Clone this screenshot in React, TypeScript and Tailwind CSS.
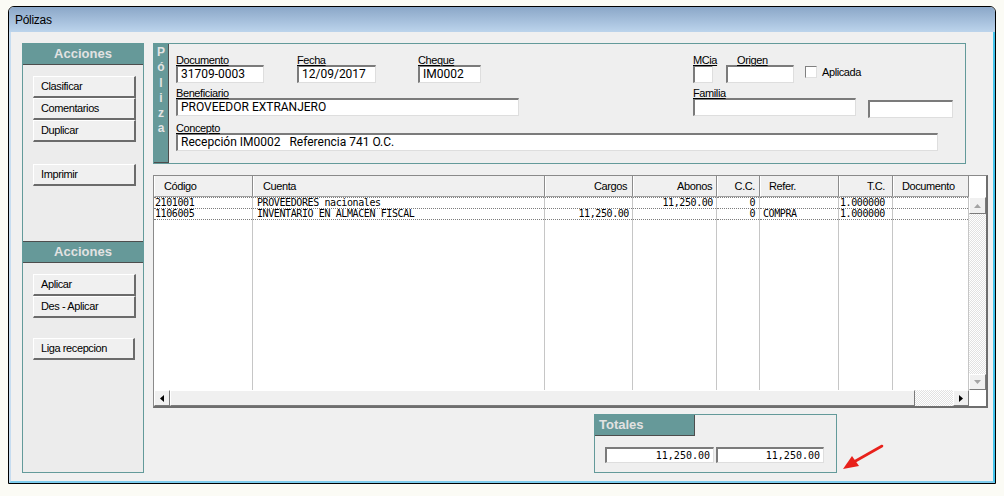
import React from "react";

const sans = "font-['Liberation_Sans',Arial,sans-serif] text-[11px] tracking-[-0.4px]";
const mono = "font-['DejaVu_Sans_Mono',monospace] text-[10px]";
const dither =
  "bg-[image:repeating-conic-gradient(#ffffff_0%_25%,#e2e2e2_0%_50%)] bg-[length:2px_2px]";

function Lbl({ children, className = "" }: { children?: React.ReactNode; className?: string }) {
  return (
    <div className={`h-[12px] leading-[14px] whitespace-nowrap underline decoration-1 underline-offset-[1px] ${className}`}>
      {children}
    </div>
  );
}

function Field({ children, className = "" }: { children?: React.ReactNode; className?: string }) {
  return (
    <div
      className={`h-[18px] bg-white border-t-2 border-l-2 border-t-[#7b7b7b] border-l-[#7b7b7b] border-r border-b border-r-[#dedede] border-b-[#dedede] pl-[3px] font-['Roboto',sans-serif] text-[12px] tracking-normal leading-[12px] pt-[1px] whitespace-pre overflow-hidden ${className}`}
    >
      {children}
    </div>
  );
}

function Btn({ label, w = "w-[103px]" }: { label: string; w?: string }) {
  return (
    <div
      className={`${w} h-[22px] bg-[#f0f0f0] border-t border-l border-t-white border-l-white border-r-2 border-b-2 border-r-[#6b6b6b] border-b-[#6b6b6b] pl-[7px] flex items-center`}
    >
      {label}
    </div>
  );
}

function Raised({ children, className = "" }: { children?: React.ReactNode; className?: string }) {
  return (
    <div
      className={`bg-[#f0f0f0] border-t border-l border-t-white border-l-white border-r border-b border-r-[#7a7a7a] border-b-[#7a7a7a] flex items-center justify-center ${className}`}
    >
      {children}
    </div>
  );
}

type Col = {
  w: string;
  h: string;
  ha: string;
  da: string;
  r: [string, string];
};

const cols: Col[] = [
  { w: "w-[99px]", h: "Código", ha: "pl-[9px] text-left", da: "pl-[1px] text-left", r: ["2101001", "1106005"] },
  { w: "w-[292px]", h: "Cuenta", ha: "pl-[9px] text-left", da: "pl-[4px] text-left", r: ["PROVEEDORES nacionales", "INVENTARIO EN ALMACEN FISCAL"] },
  { w: "w-[88px]", h: "Cargos", ha: "pr-[5px] text-right", da: "pr-[3px] text-right", r: ["", "11,250.00"] },
  { w: "w-[84px]", h: "Abonos", ha: "pr-[4px] text-right", da: "pr-[3px] text-right", r: ["11,250.00", ""] },
  { w: "w-[43px]", h: "C.C.", ha: "pr-[4px] text-right", da: "pr-[4px] text-right", r: ["0", "0"] },
  { w: "w-[79px]", h: "Refer.", ha: "pl-[8px] text-left", da: "pl-[3px] text-left", r: ["", "COMPRA"] },
  { w: "w-[54px]", h: "T.C.", ha: "pr-[7px] text-right", da: "pl-[1px] text-left", r: ["1.000000", "1.000000"] },
  { w: "w-[76px]", h: "Documento", ha: "pl-[8px] text-left", da: "pl-[2px] text-left", r: ["", ""] },
];

function Grid() {
  return (
    <div className="mt-[11px] w-[835px] h-[233px] border-t border-l border-t-[#8a8a8a] border-l-[#8a8a8a] border-r-2 border-b-2 border-r-[#6e6e6e] border-b-[#6e6e6e] bg-white flex flex-col">
      {/* header */}
      <div className="flex h-[21px]">
        {cols.map((c) => (
          <div
            key={c.h}
            className={`${c.w} h-[21px] leading-[20px] bg-[#f0f0f0] border-l border-l-white border-r border-r-[#8c8c8c] border-b border-b-[#a0a0a0] whitespace-nowrap ${c.ha}`}
          >
            {c.h}
          </div>
        ))}
        <div className="w-[17px] h-[21px] bg-white" />
      </div>
      {/* body */}
      <div className="flex h-[193px]">
        {cols.map((c) => (
          <div key={c.h} className={`${c.w} h-full border-r border-r-[#c6c6c6] flex flex-col ${mono}`}>
            {c.r.map((v, i) => (
              <div
                key={i}
                className={`h-[11px] leading-[10px] border-b border-dotted border-b-[#7c7c7c] whitespace-pre overflow-hidden ${c.da} ${i === 0 ? "border-t border-t-[#7c7c7c] h-[12px]" : ""}`}
              >
                {v}
              </div>
            ))}
          </div>
        ))}
        <div className="w-[17px] h-full flex flex-col">
          <Raised className="h-[17px]">
            <svg width="7" height="4" viewBox="0 0 7 4">
              <polygon points="0,4 7,4 3.5,0" fill="#a3a3a3" />
            </svg>
          </Raised>
          <div className={`flex-1 ${dither}`} />
          <Raised className="h-[16px]">
            <svg width="7" height="4" viewBox="0 0 7 4">
              <polygon points="0,0 7,0 3.5,4" fill="#a3a3a3" />
            </svg>
          </Raised>
        </div>
      </div>
      {/* horizontal scroll */}
      <div className="flex h-[16px]">
        <Raised className="w-[16px] h-[16px]">
          <svg width="4" height="7" viewBox="0 0 4 7">
            <polygon points="4,0 4,7 0,3.5" fill="#000" />
          </svg>
        </Raised>
        <Raised className="w-[745px] h-[16px]" />
        <div className={`w-[38px] h-[16px] ${dither}`} />
        <Raised className="w-[16px] h-[16px]">
          <svg width="4" height="7" viewBox="0 0 4 7">
            <polygon points="0,0 0,7 4,3.5" fill="#000" />
          </svg>
        </Raised>
        <div className="w-[17px] h-[16px] bg-white" />
      </div>
    </div>
  );
}

function Poliza() {
  return (
    <div className="w-[813px] h-[121px] border border-[#639a9a] bg-[#efefef] flex">
      <div className="w-[15px] h-full bg-[#669999] border-r border-b border-r-[#4d4d4d] border-b-[#4d4d4d] flex flex-col items-center pt-[1px] font-bold text-[12px] leading-[15.3px] text-[#e4e4e4] tracking-normal">
        <span>P</span>
        <span>ó</span>
        <span>l</span>
        <span>i</span>
        <span>z</span>
        <span>a</span>
      </div>
      <div className="pl-[7px] pt-[9px] flex flex-col">
        <div className="flex">
          <div className="w-[88px]">
            <Lbl>Documento</Lbl>
            <Field>31709-0003</Field>
          </div>
          <div className="ml-[33px] w-[79px]">
            <Lbl>Fecha</Lbl>
            <Field>12/09/2017</Field>
          </div>
          <div className="ml-[42px] w-[63px]">
            <Lbl>Cheque</Lbl>
            <Field>IM0002</Field>
          </div>
          <div className="ml-[212px] w-[20px]">
            <Lbl>MCia</Lbl>
            <Field />
          </div>
          <div className="ml-[13px] w-[68px]">
            <Lbl className="pl-[11px]">Origen</Lbl>
            <Field />
          </div>
          <div className="ml-[11px] pt-[12px]">
            <div className="h-[14px] flex items-center">
              <div className="w-[12px] h-[12px] bg-white border-t border-l border-t-[#808080] border-l-[#808080] border-r border-b border-r-[#e0e0e0] border-b-[#e0e0e0]" />
              <span className="ml-[5px]">Aplicada</span>
            </div>
          </div>
        </div>
        <div className="flex mt-[3px]">
          <div className="w-[343px]">
            <Lbl>Beneficiario</Lbl>
            <Field>PROVEEDOR EXTRANJERO</Field>
          </div>
          <div className="ml-[174px] w-[163px]">
            <Lbl>Familia</Lbl>
            <Field />
          </div>
          <div className="ml-[12px] w-[85px] pt-[14px]">
            <Field />
          </div>
        </div>
        <div className="mt-[3px] w-[762px]">
          <Lbl>Concepto</Lbl>
          <Field>Recepción IM0002   Referencia 741 O.C.</Field>
        </div>
      </div>
    </div>
  );
}

function LeftPanel() {
  return (
    <div className="w-[122px] h-[430px] border border-[#639a9a] bg-[#ececec] flex flex-col">
      <div className="h-[21px] bg-[#669999] border-b border-b-[#4d4d4d] flex items-center justify-center font-bold text-[13px] tracking-normal text-[#e2e2e2]">
        Acciones
      </div>
      <div className="pl-[10px] pt-[11px] flex flex-col">
        <Btn label="Clasificar" />
        <Btn label="Comentarios" />
        <Btn label="Duplicar" />
        <div className="h-[22px]" />
        <Btn label="Imprimir" />
      </div>
      <div className="mt-[55px] h-[22px] bg-[#669999] border-t border-b border-t-[#4d4d4d] border-b-[#4d4d4d] flex items-center justify-center font-bold text-[13px] tracking-normal text-[#e2e2e2]">
        Acciones
      </div>
      <div className="pl-[10px] pt-[11px] flex flex-col">
        <Btn label="Aplicar" />
        <Btn label="Des - Aplicar" />
        <div className="h-[20px]" />
        <Btn label="Liga recepcion" w="w-[102px]" />
      </div>
    </div>
  );
}

function Totales() {
  return (
    <div className="flex items-start mt-[6px]">
      <div className="ml-[441px] w-[243px] h-[59px] border border-[#639a9a] bg-[#efefef] flex flex-col">
        <div className="w-[100px] h-[21px] bg-[#669999] border-r border-b border-r-[#4d4d4d] border-b-[#4d4d4d] flex items-center pl-[4px] font-bold text-[13px] tracking-normal text-[#e2e2e2]">
          Totales
        </div>
        <div className="flex pl-[10px] mt-[11px]">
          <div className={`w-[109px] h-[16px] bg-white border-t-2 border-l-2 border-t-[#7b7b7b] border-l-[#7b7b7b] border-r border-b border-r-[#dedede] border-b-[#dedede] text-right pr-[3px] leading-[13px] tracking-normal ${mono}`}>
            11,250.00
          </div>
          <div className={`ml-[2px] w-[108px] h-[16px] bg-white border-t-2 border-l-2 border-t-[#7b7b7b] border-l-[#7b7b7b] border-r border-b border-r-[#dedede] border-b-[#dedede] text-right pr-[3px] leading-[13px] tracking-normal ${mono}`}>
            11,250.00
          </div>
        </div>
      </div>
      <svg className="ml-[5px] mt-[29px]" width="44" height="30" viewBox="0 0 44 30">
        <line x1="40" y1="3" x2="10" y2="20" stroke="#e8211b" strokeWidth="2.6" strokeLinecap="round" />
        <polygon points="1,26 10,13 17,23" fill="#e8211b" />
      </svg>
    </div>
  );
}

export default function App() {
  return (
    <div className={`w-[1004px] h-[496px] bg-[#fbfbf5] pt-[6px] pl-[8px] ${sans} text-black`}>
      <div className="w-[988px] h-[478px] border border-black rounded-t-[6px] overflow-hidden flex flex-col">
        <div className="h-[25px] bg-linear-to-b from-[#8ba7c8] to-[#bcd4ec] flex items-center pl-[6px] text-[12px] tracking-[-0.3px] pt-[1px]">
          Pólizas
        </div>
        <div className="h-[451px] bg-[#f0f0f0] border-l-2 border-l-[#c6dcf0] border-r-2 border-r-[#44c3ea] border-b-2 border-b-[#7fcdee] pl-[11px] pt-[11px] flex items-start">
          <LeftPanel />
          <div className="ml-[9px] flex flex-col">
            <Poliza />
            <Grid />
            <Totales />
          </div>
        </div>
      </div>
    </div>
  );
}
